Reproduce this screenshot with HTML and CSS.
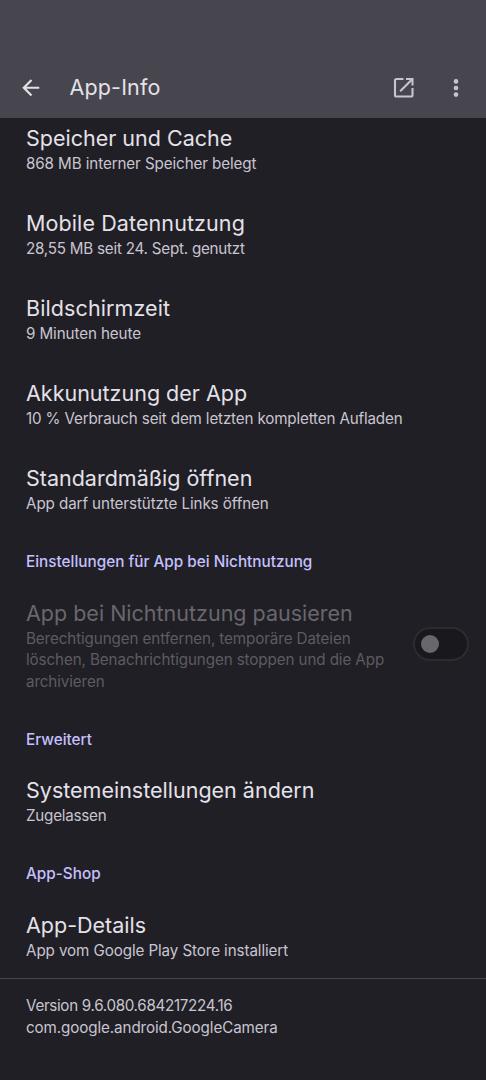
FILE: index.html
```html
<!DOCTYPE html>
<html lang="de">
<head>
<meta charset="utf-8">
<title>App-Info</title>
<link rel="stylesheet" href="styles.css">
</head>
<body>
<header class="app-bar">
  <svg class="icon icon-back" viewBox="0 0 24 24"><path d="M20 11H7.83l5.59-5.59L12 4l-8 8 8 8 1.41-1.41L7.83 13H20z"/></svg>
  <h1 class="app-title">App-Info</h1>
  <svg class="icon icon-open" viewBox="0 0 28 28"><path class="line" d="M13.500 5H6.600Q5 5 5 6.600V20.900Q5 22.500 6.600 22.500H20.900Q22.500 22.500 22.500 20.900V14M10.200 17.300L21.500 6"/><path d="M16 4H23.500V11.500H21.500V6H16z"/></svg>
  <svg class="icon icon-more" viewBox="0 0 6 20"><circle cx="3" cy="3.400" r="2.300"/><circle cx="3" cy="10" r="2.300"/><circle cx="3" cy="16.600" r="2.300"/></svg>
</header>
<main class="content">
  <section class="item first"><h2 class="title">Speicher und Cache</h2><p class="summary">868 MB interner Speicher belegt</p></section>
  <section class="item"><h2 class="title wide">Mobile Datennutzung</h2><p class="summary tight">28,55 MB seit 24. Sept. genutzt</p></section>
  <section class="item"><h2 class="title wide">Bildschirmzeit</h2><p class="summary">9 Minuten heute</p></section>
  <section class="item"><h2 class="title">Akkunutzung der App</h2><p class="summary long">10 % Verbrauch seit dem letzten kompletten Aufladen</p></section>
  <section class="item"><h2 class="title">Standardmäßig öffnen</h2><p class="summary">App darf unterstützte Links öffnen</p></section>
  <h3 class="category">Einstellungen für App bei Nichtnutzung</h3>
  <section class="item disabled">
    <div class="text"><h2 class="title">App bei Nichtnutzung pausieren</h2><p class="summary">Berechtigungen entfernen, temporäre Dateien<br>löschen, Benachrichtigungen stoppen und die App<br>archivieren</p></div>
    <div class="switch"><span class="thumb"></span></div>
  </section>
  <h3 class="category">Erweitert</h3>
  <section class="item"><h2 class="title">Systemeinstellungen ändern</h2><p class="summary tight">Zugelassen</p></section>
  <h3 class="category">App-Shop</h3>
  <section class="item last"><h2 class="title">App-Details</h2><p class="summary">App vom Google Play Store installiert</p></section>
  <footer class="footer"><p class="summary version">Version 9.6.080.684217224.16</p><p class="summary">com.google.android.GoogleCamera</p></footer>
</main>
</body>
</html>
```

FILE: styles.css
```css
* { box-sizing: border-box; }
body {
  margin: 0;
  height: 1080px;
  overflow: hidden;
  background: #201f25;
  color: #e5e1e9;
  font-family: Inter, sans-serif;
}
h1, h2, h3, p { margin: 0; font-weight: 400; }
.app-bar {
  height: 118px;
  padding: 57px 27.5px 0 17.5px;
  display: flex;
  align-items: center;
  background: #47464f;
}
.icon { fill: #c8c5d0; flex: none; }
.icon-back { width: 25.5px; height: 25.5px; fill: #e5e1e9; }
.app-title {
  margin-left: 26.5px;
  flex: 1;
  font-size: 21.5px;
  line-height: 29px;
  letter-spacing: 0.15px;
}
.icon-open { width: 28px; height: 28px; }
.line { fill: none; stroke: #c8c5d0; stroke-width: 2.1; }
.icon-more { width: 6px; height: 20px; margin-left: 35px; }
.item { padding: 17.3px 26px; }
.first { padding-top: 5.5px; }
.last { padding-bottom: 16.2px; }
.title { font-size: 21.5px; line-height: 29px; white-space: nowrap; }
.title.wide { letter-spacing: 0.1px; }
.summary {
  font-size: 15.2px;
  line-height: 21.6px;
  letter-spacing: -0.1px;
  color: #c8c5d0;
  white-space: nowrap;
}
.summary.long { letter-spacing: -0.16px; }
.summary.tight { letter-spacing: -0.23px; }
.summary.version { letter-spacing: -0.32px; }
.category {
  padding: 19px 26px 8.7px;
  font-size: 15.3px;
  font-weight: 500;
  line-height: 21.6px;
  color: #c5c0ff;
}
.disabled { display: flex; align-items: center; padding-right: 17.5px; }
.disabled .text { flex: 1; }
.disabled .title { color: #69676e; }
.disabled .summary { color: #5d5b63; }
.switch {
  width: 56px;
  height: 34px;
  margin-bottom: 3px;
  padding: 0 6.5px;
  display: flex;
  align-items: center;
  border: 2px solid #2c2b30;
  border-radius: 17px;
  background: #19181d;
}
.thumb { width: 18px; height: 18px; border-radius: 50%; background: #69676e; }
.footer { border-top: 1px solid #47464f; padding: 16.3px 26px; }
```
